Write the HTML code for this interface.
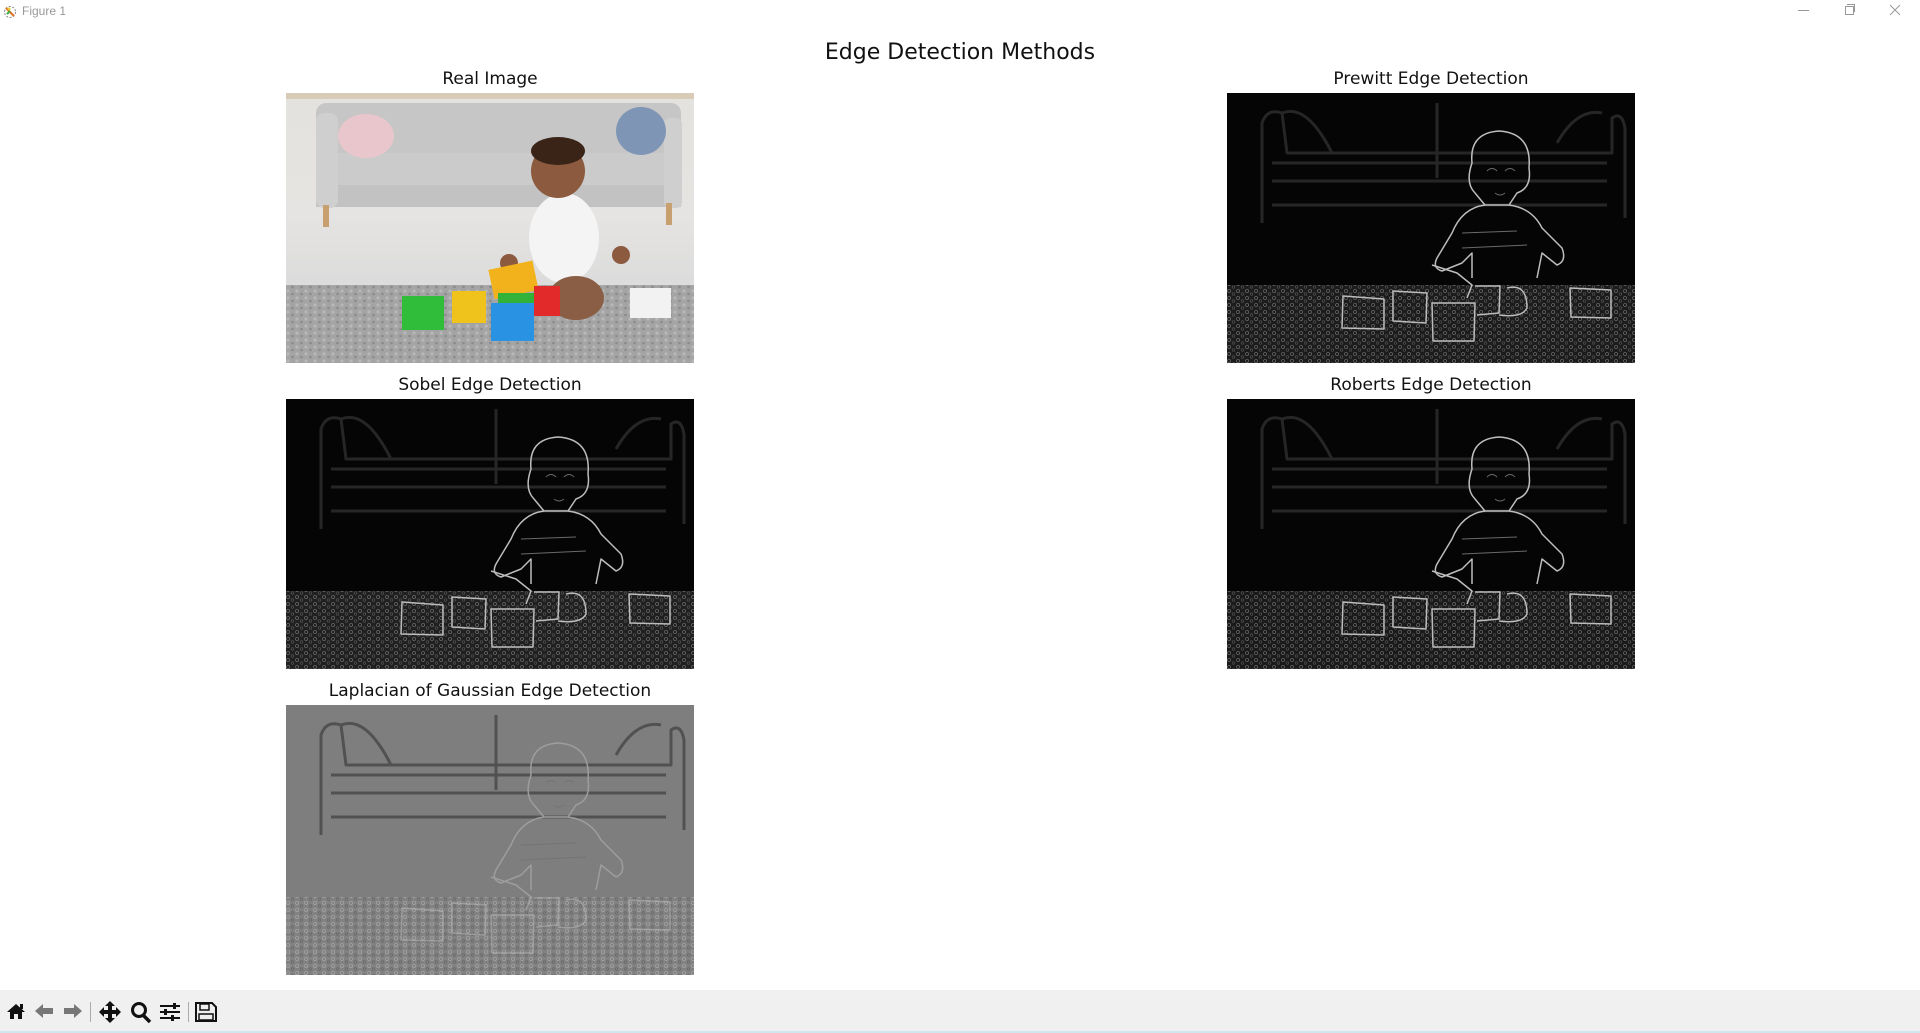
<!DOCTYPE html>
<html><head><meta charset="utf-8">
<style>
html,body{margin:0;padding:0;width:1920px;height:1033px;overflow:hidden;background:#fff;font-family:"DejaVu Sans","Liberation Sans",sans-serif;}
.abs{position:absolute}
.t{position:absolute;font-size:17px;color:#111;text-align:center;width:600px;white-space:nowrap}
.img{position:absolute;width:408px;height:270px}
</style></head><body>
<div class="abs" style="left:3px;top:4px;width:14px;height:14px">
<svg width="14" height="14" viewBox="0 0 14 14"><circle cx="7" cy="7" r="5.5" fill="none" stroke="#888" stroke-width="1" stroke-dasharray="2 1.5"/><path d="M3 3 L11 11" stroke="#e07020" stroke-width="2"/><path d="M4 9 L7 6" stroke="#4a4" stroke-width="2"/><circle cx="6" cy="4" r="1.5" fill="#ec3"/></svg></div>
<div class="abs" style="left:22px;top:4px;font-family:'Liberation Sans',sans-serif;font-size:12px;color:#999">Figure 1</div>
<div class="abs" style="left:1798px;top:10px;width:11px;height:1px;background:#999"></div>
<div class="abs" style="left:1845px;top:6px;width:7px;height:7px;border:1px solid #999"></div>
<div class="abs" style="left:1847px;top:4px;width:7px;height:7px;border-top:1px solid #999;border-right:1px solid #999"></div>
<svg class="abs" style="left:1889px;top:4px" width="12" height="12"><path d="M1 1L11 11M11 1L1 11" stroke="#999" stroke-width="1"/></svg>

<div class="abs" style="left:660px;top:40px;width:600px;text-align:center;font-size:22px;color:#111">Edge Detection Methods</div>
<div class="t" style="left:190px;top:69px">Real Image</div>
<div class="t" style="left:1131px;top:69px">Prewitt Edge Detection</div>
<div class="t" style="left:190px;top:375px">Sobel Edge Detection</div>
<div class="t" style="left:1131px;top:375px">Roberts Edge Detection</div>
<div class="t" style="left:190px;top:681px">Laplacian of Gaussian Edge Detection</div>

<svg width="0" height="0" style="position:absolute">
<defs>
<pattern id="rug" width="9" height="7" patternUnits="userSpaceOnUse">
<circle cx="2" cy="2" r="1.6" fill="none" stroke="#aaa" stroke-width="0.8" opacity=".5"/>
<circle cx="6.5" cy="5" r="1.3" fill="none" stroke="#888" stroke-width="0.7" opacity=".5"/>
</pattern>
<pattern id="rug3" width="9" height="7" patternUnits="userSpaceOnUse">
<circle cx="2" cy="2" r="1.6" fill="#c4c4c4" opacity=".6"/>
<circle cx="6.5" cy="5" r="1.3" fill="#7a7a7a" opacity=".6"/>
</pattern>
<pattern id="rug2" width="9" height="7" patternUnits="userSpaceOnUse">
<circle cx="2" cy="2" r="1.6" fill="none" stroke="#b0b0b0" stroke-width="0.8"/>
<circle cx="6.5" cy="5" r="1.3" fill="none" stroke="#606060" stroke-width="0.8"/>
</pattern>
<g id="edges" fill="none" stroke-linejoin="round">
<g stroke="#262626" stroke-width="3">
<path d="M35 130 L35 30 Q40 15 55 20 L60 60 L385 60 L385 25 Q395 18 398 35 L398 125"/>
<path d="M45 70 L380 70 M45 88 L380 88 M45 112 L380 112 M210 10 L210 85"/>
<path d="M55 20 Q80 10 105 60 M330 50 Q350 15 375 20"/>
</g>
<g stroke="#bdbdbd" stroke-width="1.5">
<path d="M245 70 Q242 40 272 38 Q305 40 302 75 Q305 95 290 100 L282 112 L258 112 L248 100 Q238 90 245 70 Z"/>
<path d="M258 112 Q235 115 225 140 L210 165 Q205 175 215 178 L235 170 L245 160 L245 185 M282 112 Q305 115 315 135 L335 155 Q340 168 330 172 L315 160 L310 185"/>
<path d="M205 172 L230 180 L245 192 L240 205 M205 210 L248 210 L247 248 L206 248 Z M116 203 L157 206 L157 236 L115 235 Z M166 198 L200 200 L199 230 L166 228 Z M343 195 L384 197 L384 225 L344 224 Z M248 193 L273 193 L272 220 L250 222"/>
<path d="M280 195 Q300 190 300 215 Q295 225 272 222"/>
</g>
<g stroke="#6a6a6a" stroke-width="1">
<path d="M260 78 Q265 73 270 78 M278 78 Q283 73 288 78 M268 100 Q273 104 278 100 M235 140 L290 138 M235 155 L300 152"/>
</g>
</g>
</defs></svg>

<svg class="img" style="left:286px;top:93px" viewBox="0 0 408 270" preserveAspectRatio="none">
<defs><linearGradient id="bg" x1="0" y1="0" x2="0" y2="1"><stop offset="0" stop-color="#e4e2de"/><stop offset=".45" stop-color="#e6e4e2"/><stop offset=".7" stop-color="#dcdcdc"/><stop offset="1" stop-color="#d6d6d6"/></linearGradient></defs>
<rect width="408" height="270" fill="url(#bg)"/>
<rect x="0" y="0" width="408" height="6" fill="#d8ccb8"/>
<rect x="30" y="10" width="365" height="60" rx="10" fill="#c6c6c6"/>
<rect x="45" y="60" width="340" height="35" rx="8" fill="#cbcbcb"/>
<rect x="30" y="92" width="365" height="22" fill="#c2c2c2"/>
<rect x="30" y="20" width="22" height="95" rx="8" fill="#cfcfcf"/>
<rect x="378" y="25" width="18" height="90" rx="6" fill="#cfcfcf"/>
<ellipse cx="80" cy="43" rx="28" ry="22" fill="#e8c6cc"/>
<ellipse cx="355" cy="38" rx="25" ry="24" fill="#7e95b5"/>
<rect x="37" y="112" width="6" height="22" fill="#c8a070"/>
<rect x="380" y="110" width="6" height="22" fill="#c8a070"/>
<rect x="0" y="192" width="408" height="78" fill="#a4a4a4"/>
<rect x="0" y="192" width="408" height="78" fill="url(#rug3)"/>
<ellipse cx="278" cy="145" rx="35" ry="45" fill="#f4f4f4"/>
<ellipse cx="290" cy="205" rx="28" ry="22" fill="#8a5e45"/>
<circle cx="272" cy="78" r="27" fill="#8c5a3e"/>
<ellipse cx="272" cy="58" rx="27" ry="14" fill="#3a2418"/>
<circle cx="223" cy="170" r="9" fill="#8c5a3e"/>
<circle cx="335" cy="162" r="9" fill="#8c5a3e"/>
<rect x="116" y="203" width="42" height="34" fill="#2fbd3a"/>
<rect x="166" y="198" width="34" height="32" fill="#f0c21c"/>
<rect x="205" y="172" width="45" height="30" fill="#f2b21c" transform="rotate(-12 227 187)"/>
<rect x="248" y="193" width="26" height="30" fill="#e22a2a"/>
<rect x="212" y="200" width="36" height="14" fill="#33b23a"/>
<rect x="205" y="210" width="43" height="38" fill="#2a92e2"/>
<rect x="344" y="195" width="41" height="30" fill="#f2f2f2"/>
</svg>

<svg class="img" style="left:1227px;top:93px" viewBox="0 0 408 270" preserveAspectRatio="none">
<rect width="408" height="270" fill="#050505"/>
<rect x="0" y="192" width="408" height="78" fill="#1c1c1c"/>
<rect x="0" y="192" width="408" height="78" fill="url(#rug)"/>
<use href="#edges"/>
</svg>
<svg class="img" style="left:286px;top:399px" viewBox="0 0 408 270" preserveAspectRatio="none">
<rect width="408" height="270" fill="#050505"/>
<rect x="0" y="192" width="408" height="78" fill="#202020"/>
<rect x="0" y="192" width="408" height="78" fill="url(#rug)"/>
<use href="#edges"/>
</svg>
<svg class="img" style="left:1227px;top:399px" viewBox="0 0 408 270" preserveAspectRatio="none">
<rect width="408" height="270" fill="#050505"/>
<rect x="0" y="192" width="408" height="78" fill="#1a1a1a"/>
<rect x="0" y="192" width="408" height="78" fill="url(#rug)"/>
<use href="#edges"/>
</svg>
<svg class="img" style="left:286px;top:705px" viewBox="0 0 408 270" preserveAspectRatio="none">
<rect width="408" height="270" fill="#7e7e7e"/>
<rect x="0" y="192" width="408" height="78" fill="#828282"/>
<rect x="0" y="192" width="408" height="78" fill="url(#rug2)" opacity=".7"/>
<g opacity=".5"><use href="#edges"/></g>
</svg>

<div class="abs" style="left:0;top:990px;width:1920px;height:43px;background:#f0f0f0"></div>
<div class="abs" style="left:0;top:1031px;width:1920px;height:2px;background:#cfe6ee"></div>
<svg class="abs" style="left:0;top:1000px" width="230" height="24" viewBox="0 0 230 24">
<path d="M7 12 L16 4 L25 12 L22 12 L22 19 L18 19 L18 14 L14 14 L14 19 L10 19 L10 12 Z" fill="#111"/>
<rect x="20" y="4" width="3" height="5" fill="#111"/>
<path d="M35 11 L43 4 L43 8 L53 8 L53 14 L43 14 L43 18 Z" fill="#777"/>
<path d="M82 11 L74 4 L74 8 L64 8 L64 14 L74 14 L74 18 Z" fill="#777"/>
<rect x="90" y="2" width="1" height="20" fill="#aaa"/>
<path d="M110 1 L115 6 L112 6 L112 10 L116 10 L116 7 L121 12 L116 17 L116 14 L112 14 L112 18 L115 18 L110 23 L105 18 L108 18 L108 14 L104 14 L104 17 L99 12 L104 7 L104 10 L108 10 L108 6 L105 6 Z" fill="#111"/>
<circle cx="139" cy="10" r="6.5" fill="none" stroke="#111" stroke-width="3"/>
<path d="M143 15 L150 22" stroke="#111" stroke-width="3.5"/>
<path d="M160 6 H180 M160 12 H180 M160 18 H180" stroke="#111" stroke-width="2"/>
<rect x="173" y="3" width="3" height="6" fill="#111"/><rect x="164" y="9" width="3" height="6" fill="#111"/><rect x="171" y="15" width="3" height="6" fill="#111"/>
<rect x="188" y="2" width="1" height="20" fill="#aaa"/>
<path d="M196 3 H212 L216 7 V21 H196 Z" fill="none" stroke="#111" stroke-width="2"/>
<rect x="200" y="4" width="9" height="6" fill="none" stroke="#111" stroke-width="1.5"/>
<rect x="199" y="14" width="14" height="6" fill="none" stroke="#111" stroke-width="1.5"/>
</svg>
</body></html>
